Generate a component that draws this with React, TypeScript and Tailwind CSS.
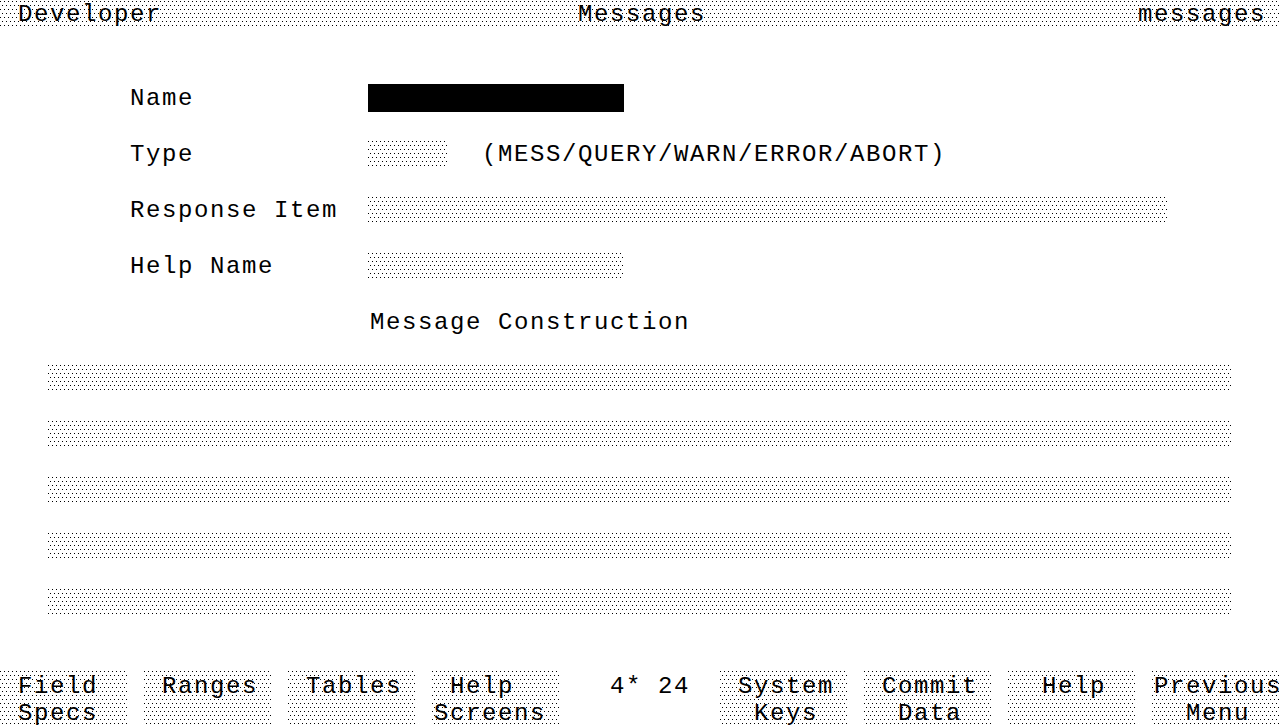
const DOTS =
  "bg-[image:conic-gradient(from_270deg_at_1px_1px,#000_90deg,transparent_0),conic-gradient(from_270deg_at_1px_1px,#000_90deg,transparent_0)] bg-[length:4px_8px] bg-[position:0_1px,2px_5px]";

const FONT = "font-['Liberation_Mono','DejaVu_Sans_Mono',monospace] text-[24px] tracking-[1.6px] leading-[30px]";

function Row({ children }: { children?: React.ReactNode }) {
  return <div className="flex h-[28px] items-start whitespace-pre">{children}</div>;
}

function Label({ text }: { text: string }) {
  return <span className="w-[240px] pl-[2px]">{text}</span>;
}

const softkeys = [
  [" Field", " Specs"],
  [" Ranges", ""],
  [" Tables", ""],
  [" Help", "Screens"],
];
const softkeysRight = [
  [" System", "  Keys"],
  [" Commit", "  Data"],
  ["  Help", ""],
  ["Previous", "  Menu"],
];

function Key({ top, bottom }: { top: string; bottom: string }) {
  return (
    <div className={`w-[128px] h-[54px] mt-[-2px] ${DOTS} pt-[2px]`}>
      <div className="h-[28px] pl-[2px]">{top}</div>
      <div className="h-[26px] pl-[2px] leading-[28px]">{bottom}</div>
    </div>
  );
}

export default function App() {
  return (
    <div className={`w-[1280px] h-[726px] bg-white text-black overflow-hidden flex flex-col ${FONT}`}>
      <div className={`flex h-[26px] mb-[2px] whitespace-pre ${DOTS}`}>
        <span className="w-[576px] pl-[18px]">Developer</span>
        <span className="w-[560px] pl-[2px]">Messages</span>
        <span className="pl-[2px]">messages</span>
      </div>
      <Row />
      <Row />
      <Row>
        <span className="w-[128px]" />
        <Label text="Name" />
        <span className="w-[256px] h-[28px] bg-black" />
      </Row>
      <Row />
      <Row>
        <span className="w-[128px]" />
        <Label text="Type" />
        <span className={`w-[80px] h-[26px] ${DOTS}`} />
        <span className="w-[32px]" />
        <span className="pl-[2px]">(MESS/QUERY/WARN/ERROR/ABORT)</span>
      </Row>
      <Row />
      <Row>
        <span className="w-[128px]" />
        <Label text="Response Item" />
        <span className={`w-[800px] h-[26px] ${DOTS}`} />
      </Row>
      <Row />
      <Row>
        <span className="w-[128px]" />
        <Label text="Help Name" />
        <span className={`w-[256px] h-[26px] ${DOTS}`} />
      </Row>
      <Row />
      <Row>
        <span className="w-[368px]" />
        <span className="pl-[2px]">Message Construction</span>
      </Row>
      {[0, 1, 2, 3, 4].map((i) => (
        <div key={i}>
          <Row />
          <Row>
            <span className="w-[48px]" />
            <span className={`w-[1184px] h-[26px] ${DOTS}`} />
          </Row>
        </div>
      ))}
      <Row />
      <Row />
      <div className="flex h-[54px] whitespace-pre">
        {softkeys.map(([t, b], i) => (
          <div key={i} className="flex">
            <Key top={t} bottom={b} />
            <span className="w-[16px]" />
          </div>
        ))}
        <div className="w-[144px] h-[28px] pl-[34px]">4* 24</div>
        {softkeysRight.map(([t, b], i) => (
          <div key={i} className="flex">
            {i > 0 && <span className="w-[16px]" />}
            <Key top={t} bottom={b} />
          </div>
        ))}
      </div>
    </div>
  );
}
